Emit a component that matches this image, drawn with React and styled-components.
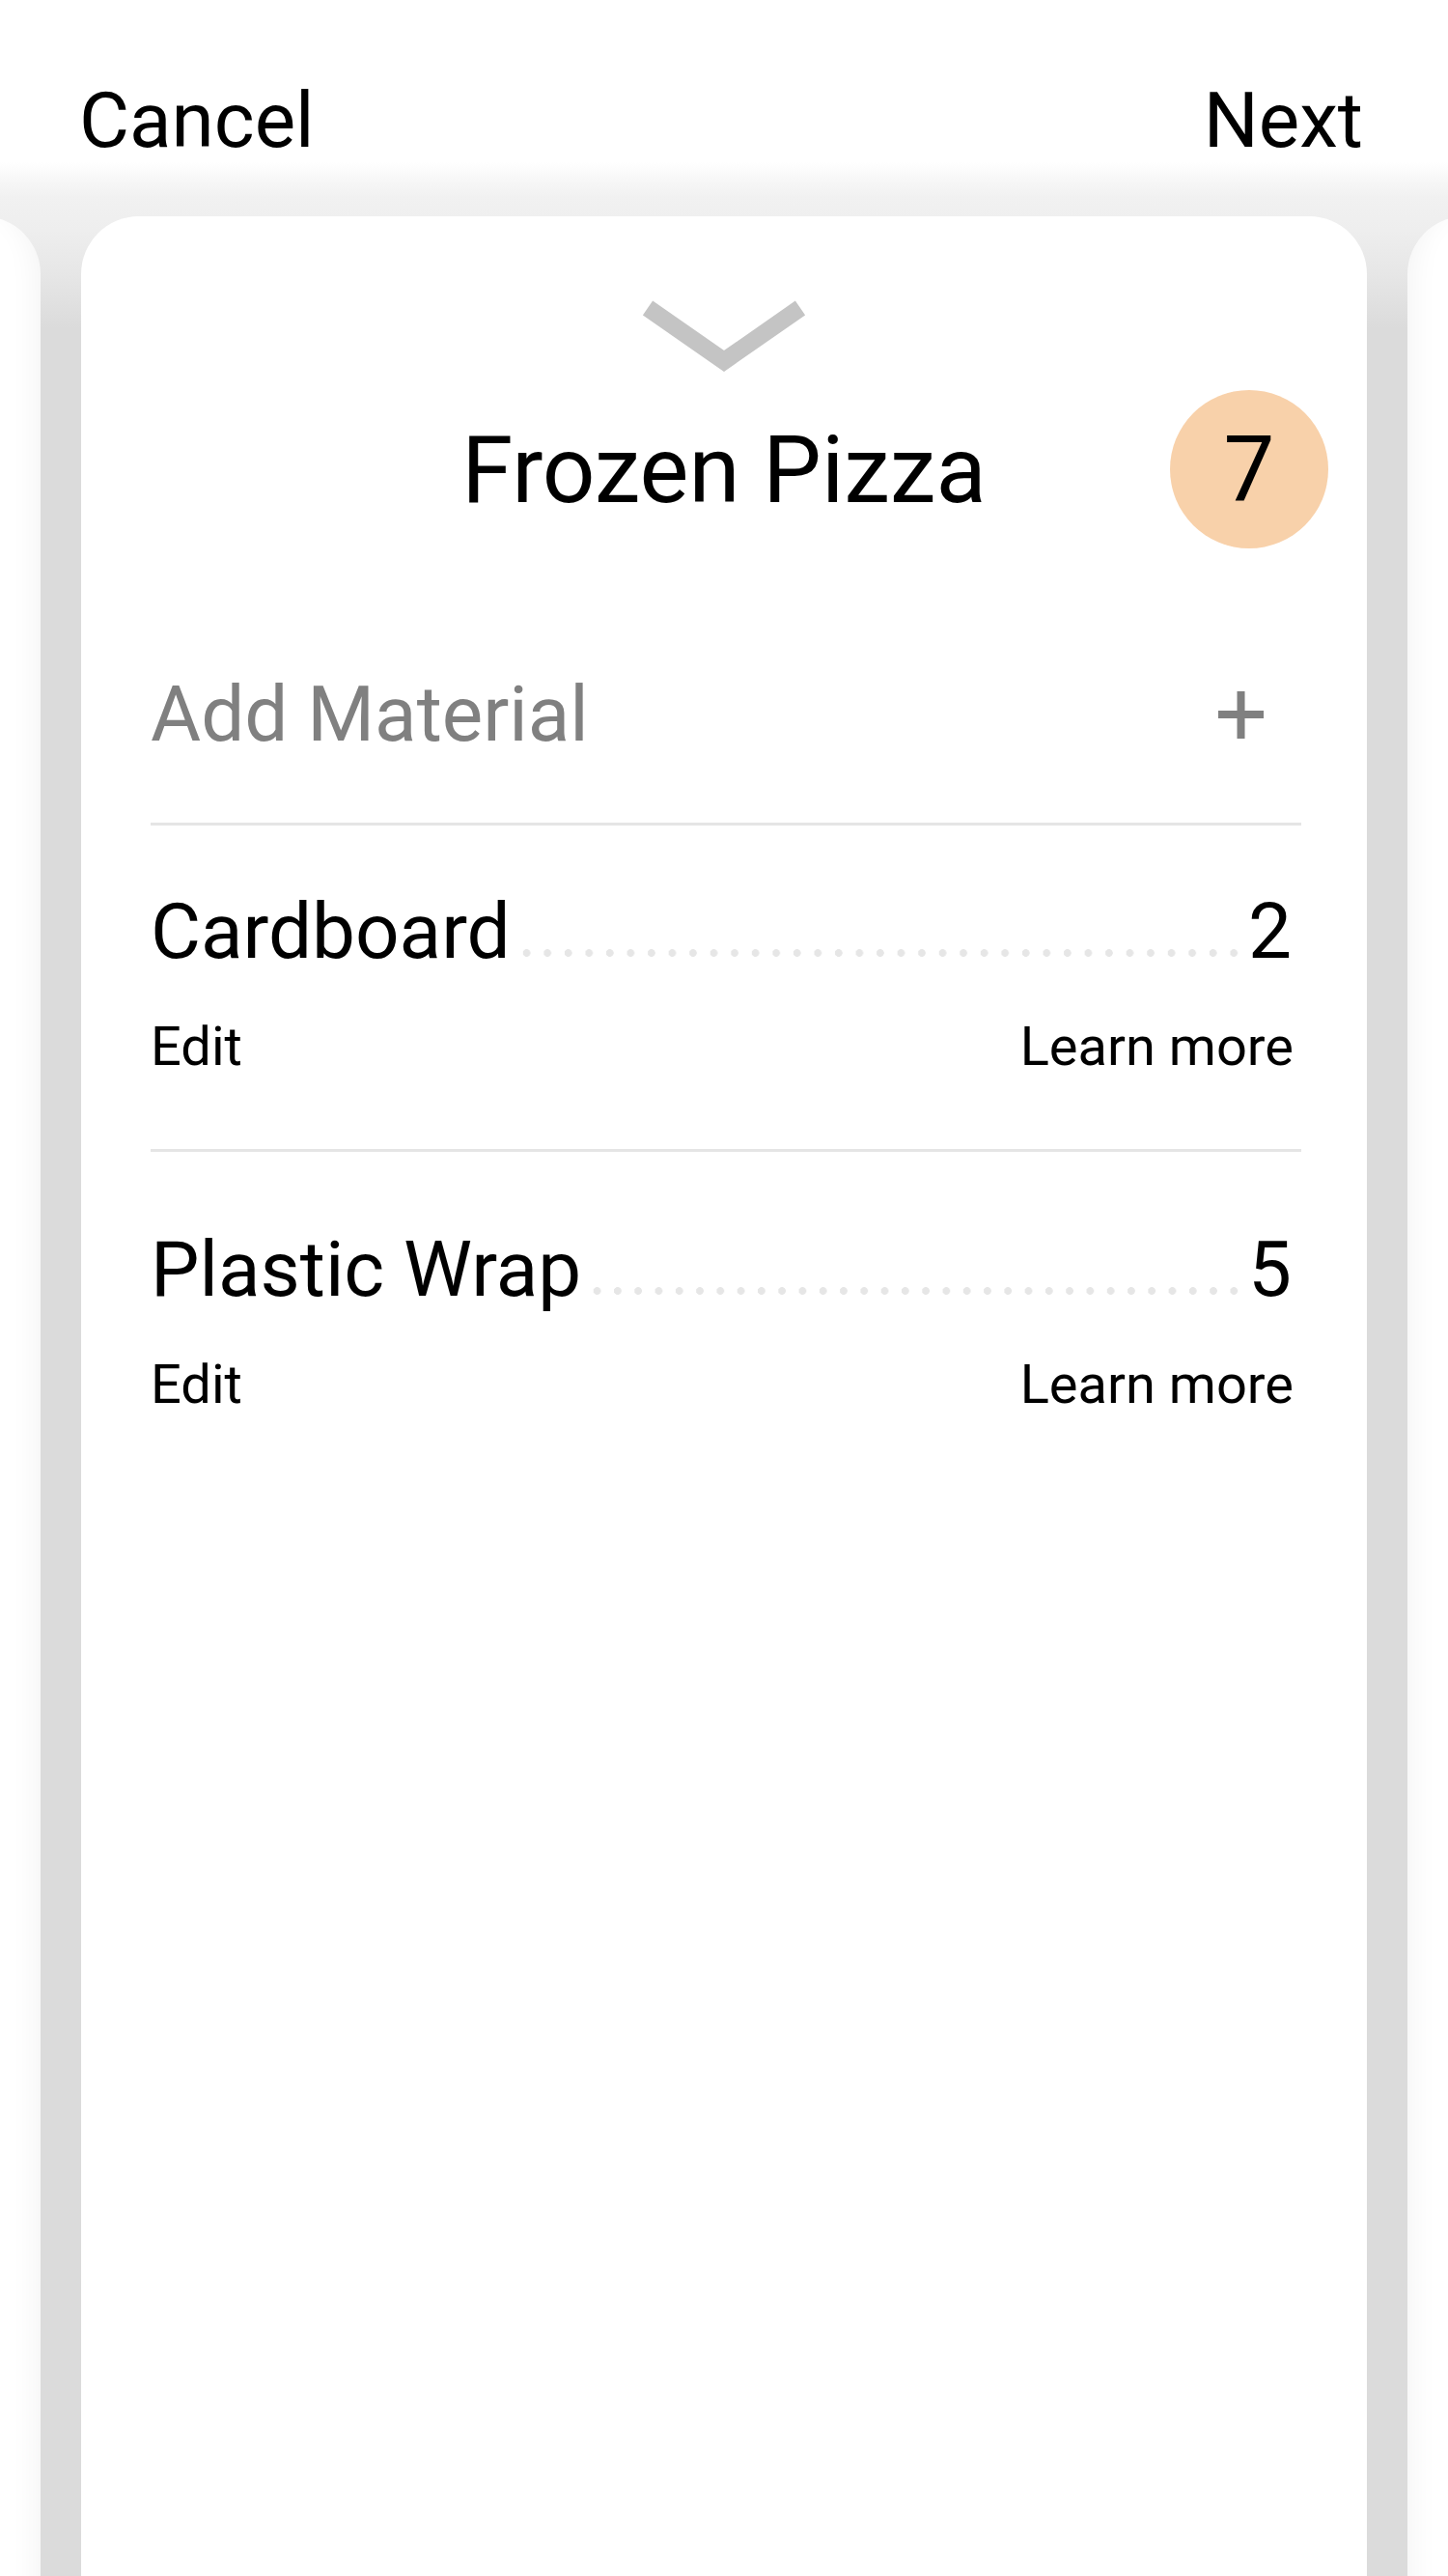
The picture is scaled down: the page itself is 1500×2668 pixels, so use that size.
import styled, { createGlobalStyle } from "styled-components";

const materials = [
    { id: 1, name: "Cardboard", count: 2 },
    { id: 2, name: "Plastic Wrap", count: 5 },
];

const App = () => {
    const total = materials.reduce((sum, m) => sum + m.count, 0);

    return (
        <>
            <GlobalStyle />
            <Screen>
                <Header>
                    <HeaderButton>Cancel</HeaderButton>
                    <HeaderButton>Next</HeaderButton>
                </Header>

                <Carousel>
                    <Card $side="left" />
                    <Card>
                        <Handle>
                            <svg width="168" height="76" viewBox="0 0 168 76">
                                <polyline
                                    points="5,8 84,63 163,8"
                                    fill="none"
                                    stroke="#c4c4c4"
                                    strokeWidth="18"
                                    strokeLinejoin="miter"
                                />
                            </svg>
                        </Handle>

                        <TitleRow>
                            <Title>Frozen Pizza</Title>
                            <Badge>{total}</Badge>
                        </TitleRow>

                        <Body>
                            <AddRow>
                                <AddLabel>Add Material</AddLabel>
                                <AddButton aria-label="Add material">
                                    <svg width="47" height="49" viewBox="0 0 47 49">
                                        <path d="M23.5 0v49M0 24h47" stroke="#808080" strokeWidth="8" />
                                    </svg>
                                </AddButton>
                            </AddRow>

                            <MaterialList>
                                {materials.map((m, i) => (
                                    <li key={m.id}>
                                        {i > 0 && <Separator />}
                                        <NameRow>
                                            <span>{m.name}</span>
                                            <Leader />
                                            <span>{m.count}</span>
                                        </NameRow>
                                        <ActionsRow>
                                            <ActionLink>Edit</ActionLink>
                                            <ActionLink>Learn more</ActionLink>
                                        </ActionsRow>
                                    </li>
                                ))}
                            </MaterialList>
                        </Body>
                    </Card>
                    <Card $side="right" />
                </Carousel>
            </Screen>
        </>
    );
};

export default App;

const GlobalStyle = createGlobalStyle`
    html, body {
        margin: 0;
        padding: 0;
        background: #ffffff;
    }
    body {
        font-family: Roboto, "Noto Sans", Arial, sans-serif;
        color: #000000;
    }
`;

const Screen = styled.div`
    display: flex;
    flex-direction: column;
    height: 100vh;
    overflow: hidden;
`;

const Header = styled.header`
    display: flex;
    justify-content: space-between;
    align-items: flex-start;
    box-sizing: border-box;
    height: 168px;
    padding: 85px 88px 0 82px;
    background: #ffffff;
`;

const HeaderButton = styled.button`
    padding: 0;
    border: none;
    background: transparent;
    font-family: inherit;
    font-size: 80px;
    line-height: 80px;
    color: #000000;
    cursor: pointer;
`;

const Carousel = styled.div`
    flex: 1;
    display: flex;
    justify-content: center;
    gap: 42px;
    padding-top: 56px;
    overflow: hidden;
    background: linear-gradient(
        to bottom,
        #ffffff 0,
        #f8f8f8 16px,
        #f1f1f1 36px,
        #eeeeee 70px,
        #e6e6e6 118px,
        #dbdbdb 172px,
        #dbdbdb 100%
    );
`;

const Card = styled.section`
    flex: 0 0 1332px;
    height: calc(100% + 120px);
    background: #ffffff;
    border-radius: 60px;
    box-shadow: ${(p) =>
        p.$side === "left"
            ? "inset -34px 0 30px -30px rgba(0, 0, 0, 0.05)"
            : p.$side === "right"
            ? "inset 34px 0 30px -30px rgba(0, 0, 0, 0.05)"
            : "none"};
`;

const Handle = styled.div`
    display: flex;
    justify-content: center;
    padding-top: 87px;

    svg {
        display: block;
    }
`;

const TitleRow = styled.div`
    display: grid;
    grid-template-columns: 1fr auto 1fr;
    align-items: center;
    padding: 17px 40px 0;
`;

const Title = styled.h1`
    grid-column: 2;
    margin: 0;
    padding-top: 2px;
    font-size: 96px;
    line-height: 94px;
    font-weight: 400;
`;

const Badge = styled.div`
    grid-column: 3;
    justify-self: end;
    display: flex;
    align-items: center;
    justify-content: center;
    width: 164px;
    height: 164px;
    border-radius: 50%;
    background: #f8d1aa;
    font-size: 94px;
    line-height: 1;
`;

const Body = styled.div`
    padding: 0 68px 0 72px;
`;

const AddRow = styled.div`
    display: flex;
    justify-content: space-between;
    align-items: center;
    padding: 132px 0 72px;
    border-bottom: 3px solid #e5e5e5;
`;

const AddLabel = styled.span`
    font-size: 80px;
    line-height: 80px;
    color: #808080;
`;

const AddButton = styled.button`
    margin-right: 39px;
    padding: 0;
    border: none;
    background: transparent;
    cursor: pointer;

    svg {
        display: block;
    }
`;

const MaterialList = styled.ul`
    margin: 0;
    padding: 70px 0 0;
    list-style: none;
`;

const Separator = styled.div`
    height: 3px;
    margin: 78px 0 82px;
    background: #e5e5e5;
`;

const NameRow = styled.div`
    display: flex;
    align-items: flex-end;
    padding-right: 10px;
    font-size: 80px;
    line-height: 80px;
`;

const Leader = styled.span`
    flex: 1;
    height: 8px;
    margin: 0 4px 14px 6px;
    background-image: radial-gradient(circle, #e6e6e6 3.6px, transparent 4.2px);
    background-size: 21px 8px;
    background-repeat: space no-repeat;
`;

const ActionsRow = styled.div`
    display: flex;
    justify-content: space-between;
    margin-top: 51px;
    padding-right: 8px;
`;

const ActionLink = styled.button`
    padding: 0;
    border: none;
    background: transparent;
    font-family: inherit;
    font-size: 56px;
    line-height: 56px;
    color: #000000;
    cursor: pointer;
`;
